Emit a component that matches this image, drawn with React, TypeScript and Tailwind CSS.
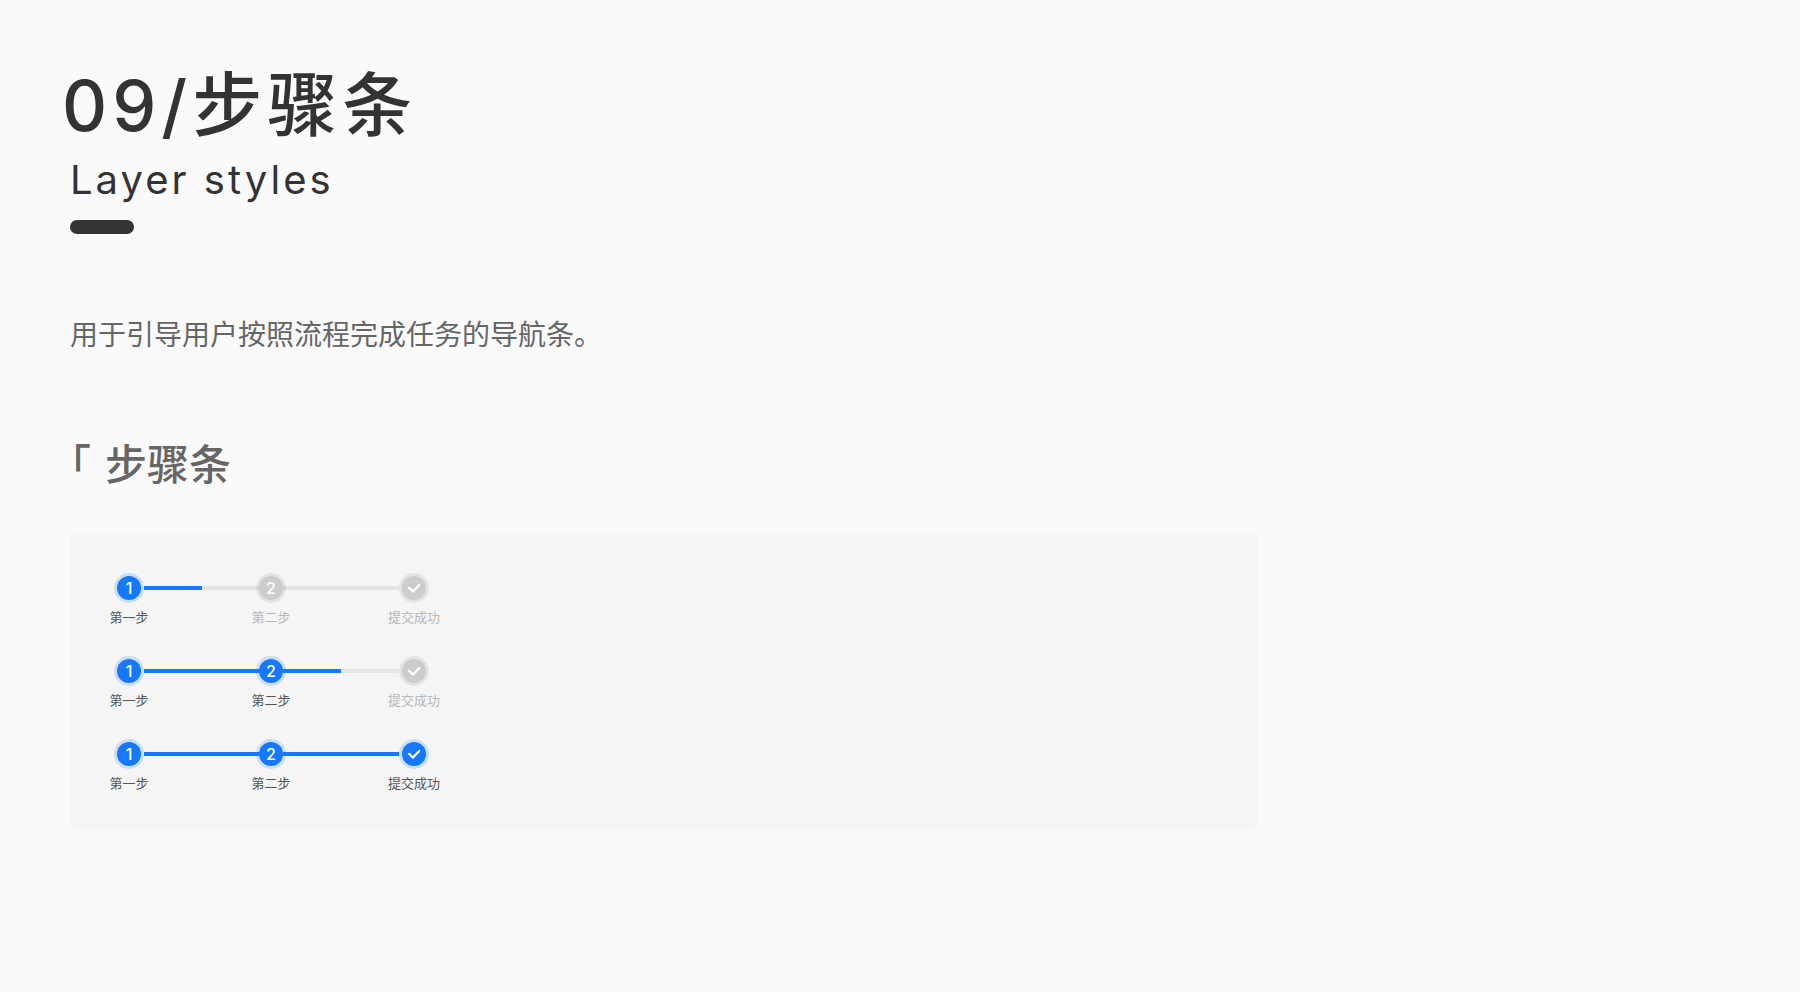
import { clsx } from 'clsx';

type Progress = 'none' | 'half' | 'full';

interface Flow {
  id: number;
  done: number;
  lines: [Progress, Progress];
}

const labels = ['第一步', '第二步', '提交成功'];

const flows: Flow[] = [
  { id: 1, done: 1, lines: ['half', 'none'] },
  { id: 2, done: 2, lines: ['full', 'half'] },
  { id: 3, done: 3, lines: ['full', 'full'] },
];

function CheckMark() {
  return (
    <svg viewBox="0 0 24 24" className="size-6" fill="none" stroke="currentColor" strokeWidth="2.2" strokeLinecap="round" strokeLinejoin="round">
      <path d="M7 11.8l4 3.8 6.2-6.6" />
    </svg>
  );
}

function Step({ index, active }: { index: number; active: boolean }) {
  const isLast = index === labels.length - 1;

  return (
    <li className="relative flex flex-col items-center gap-1.5">
      <span
        className={clsx(
          'flex size-[30px] items-center justify-center rounded-full p-[3px]',
          active ? 'bg-[#1677ff]/18' : 'bg-black/7'
        )}
      >
        <span
          className={clsx(
            'flex size-6 items-center justify-center rounded-full text-base leading-6 font-medium text-white',
            active ? 'bg-[#1677ff]' : 'bg-[#cccccc]'
          )}
        >
          {isLast ? <CheckMark /> : index + 1}
        </span>
      </span>
      <span className={clsx('text-[13px] leading-4 whitespace-nowrap', active ? 'text-[#555555]' : 'text-[#b8b8b8]')}>
        {labels[index]}
      </span>
    </li>
  );
}

function Line({ progress, className }: { progress: Progress; className: string }) {
  return (
    <li aria-hidden="true" className={clsx('mt-[13px] h-1 bg-[#e4e4e4]', className)}>
      <div
        className={clsx(
          'h-full bg-[#1677ff]',
          progress === 'none' && 'w-0',
          progress === 'half' && 'w-1/2',
          progress === 'full' && 'w-full'
        )}
      />
    </li>
  );
}

function Steps({ flow }: { flow: Flow }) {
  // the lines run under the translucent ring of the middle step
  return (
    <ol className="grid grid-cols-[52px_90px_52px_91px_52px]">
      <Step index={0} active={flow.done > 0} />
      <Line progress={flow.lines[0]} className="-mr-[14px] -ml-[11px]" />
      <Step index={1} active={flow.done > 1} />
      <Line progress={flow.lines[1]} className="-mr-[11px] -ml-[14px]" />
      <Step index={2} active={flow.done > 2} />
    </ol>
  );
}

export default function App() {
  return (
    <main className="min-h-screen bg-[#fafafa] px-[70px] pt-[66px] pb-20 font-[Inter,'Noto_Sans_CJK_SC',sans-serif] text-[#333333]">
      <header>
        <h1 className="-ml-2 text-[70px] leading-[80px] font-medium tracking-[5px]">09/步骤条</h1>
        <p className="mt-1.5 text-[40px] leading-[56px] tracking-[3px]">Layer styles</p>
        <div className="mt-3 h-[14px] w-16 rounded-full bg-[#333333]" />
      </header>

      <p className="mt-[81px] text-[28px] leading-10 text-[#666666]">用于引导用户按照流程完成任务的导航条。</p>

      <section className="mt-20">
        <h2 className="flex gap-[14px] text-[42px] leading-[60px] font-medium text-[#666666]">
          <span className="[font-feature-settings:'halt']">「</span>
          步骤条
        </h2>
        <div className="mt-[38px] flex w-full max-w-[1189px] flex-col gap-[31px] rounded-[10px] bg-[#f5f5f5] px-[33px] py-10">
          {flows.map((flow) => (
            <Steps key={flow.id} flow={flow} />
          ))}
        </div>
      </section>
    </main>
  );
}
